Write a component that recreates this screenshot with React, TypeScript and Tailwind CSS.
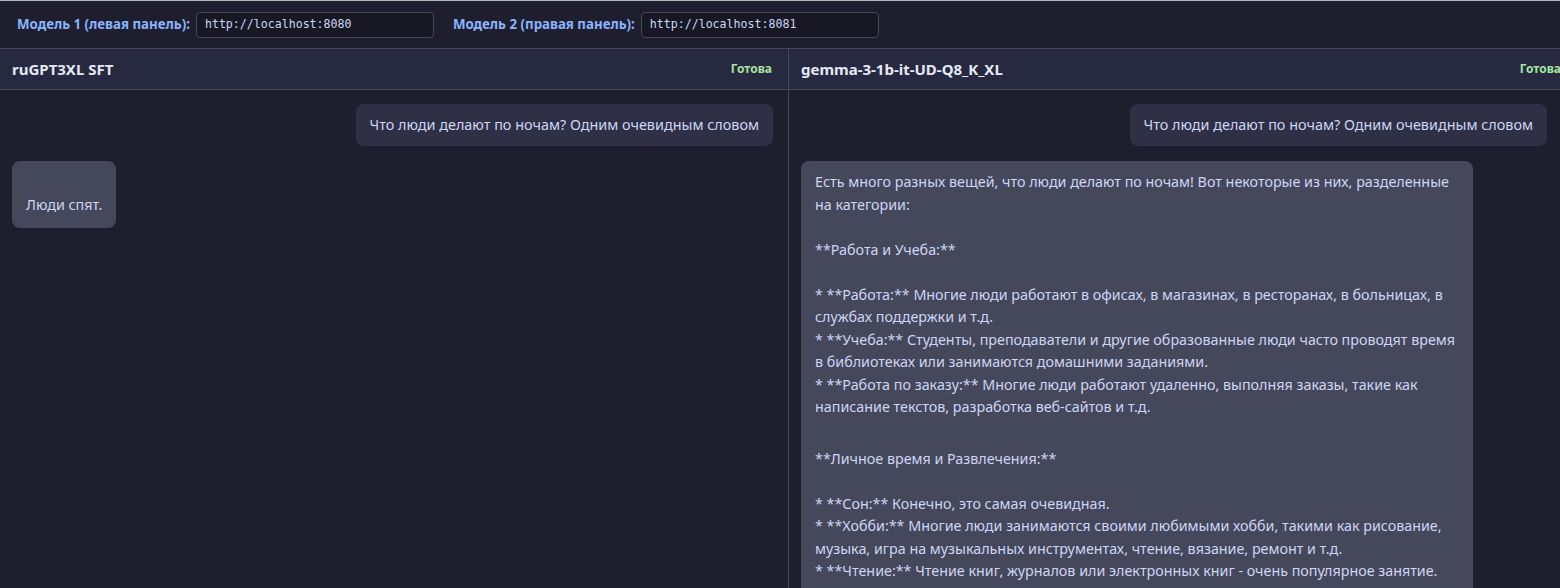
import React from 'react'

interface Message {
  role: 'user' | 'assistant'
  parts: string[]
}

const question = 'Что люди делают по ночам? Одним очевидным словом'

const leftMessages: Message[] = [
  { role: 'user', parts: [question] },
  { role: 'assistant', parts: ['\nЛюди спят.'] },
]

// the answer is split where the reference shows a slightly taller gap
const rightMessages: Message[] = [
  { role: 'user', parts: [question] },
  {
    role: 'assistant',
    parts: [
      `Есть много разных вещей, что люди делают по ночам! Вот некоторые из них, разделенные на категории:

**Работа и Учеба:**

* **Работа:** Многие люди работают в офисах, в магазинах, в ресторанах, в больницах, в службах поддержки и т.д.
* **Учеба:** Студенты, преподаватели и другие образованные люди часто проводят время в библиотеках или занимаются домашними заданиями.
* **Работа по заказу:** Многие люди работают удаленно, выполняя заказы, такие как написание текстов, разработка веб-сайтов и т.д.`,
      `**Личное время и Развлечения:**

* **Сон:** Конечно, это самая очевидная.
* **Хобби:** Многие люди занимаются своими любимыми хобби, такими как рисование, музыка, игра на музыкальных инструментах, чтение, вязание, ремонт и т.д.
* **Чтение:** Чтение книг, журналов или электронных книг - очень популярное занятие.`,
    ],
  },
]

function UrlField({ label, value }: { label: string; value: string }) {
  return (
    <div className="flex items-center gap-1.5">
      <span className="text-[13.3px] font-bold text-[#89b4fa]">{label}</span>
      <div className="flex h-[26px] w-[238px] items-center rounded-[4px] border border-[#45475a] bg-[#181825] px-2 font-['DejaVu_Sans_Mono',monospace] text-[11.6px] text-[#cdd6f4]">
        {value}
      </div>
    </div>
  )
}

function Bubble({ message }: { message: Message }) {
  if (message.role === 'user') {
    return (
      <div className="flex justify-end">
        <div className="whitespace-pre-wrap rounded-lg bg-[#2f3045] px-3.5 py-2.5 text-[14.4px] leading-[22px] text-[#cdd6f4]">
          {message.parts[0]}
        </div>
      </div>
    )
  }
  return (
    <div className="flex justify-start">
      <div className="max-w-[672px] whitespace-pre-wrap rounded-lg bg-[#45475a] px-3.5 pb-3 pt-2.5 text-[14.3px] leading-[22.5px] text-[#cdd6f4]">
        {message.parts.map((p, i) => (
          <div key={i} className={i > 0 ? 'pt-[29px]' : ''}>
            {p}
          </div>
        ))}
      </div>
    </div>
  )
}

function ChatPanel({ title, messages, scrolled }: { title: string; messages: Message[]; scrolled?: boolean }) {
  return (
    <div className="flex w-[788px] shrink-0 flex-col">
      <div className="flex h-[41px] shrink-0 items-center justify-between border-b border-[#45475a] bg-[#262940] pl-3 pr-4">
        <span className="text-[15px] font-bold text-[#e6e9f5]">{title}</span>
        <span className="text-[12px] font-bold text-[#a6e3a1]">Готова</span>
      </div>
      <div className={scrolled ? 'flex flex-1 flex-col gap-[15px] overflow-hidden pl-3 pr-[30px] pt-[14px]' : 'flex flex-1 flex-col gap-[15px] overflow-hidden pl-3 pr-[15px] pt-[14px]'}>
        {messages.map((m, i) => (
          <Bubble key={i} message={m} />
        ))}
      </div>
    </div>
  )
}

export default function App() {
  return (
    <div className="flex h-[588px] w-full flex-col overflow-hidden border-t border-[#b5b5bd] bg-[#1e1e2e] font-['Noto_Sans',sans-serif]">
      <div className="flex h-[48px] shrink-0 items-center gap-[19px] border-b border-[#45475a] bg-[#1e1e2e] px-[17px]">
        <UrlField label="Модель 1 (левая панель):" value="http://localhost:8080" />
        <UrlField label="Модель 2 (правая панель):" value="http://localhost:8081" />
      </div>
      <div className="flex flex-1 overflow-hidden">
        <ChatPanel title="ruGPT3XL SFT" messages={leftMessages} />
        <div className="w-px shrink-0 bg-[#45475a]" />
        <ChatPanel title="gemma-3-1b-it-UD-Q8_K_XL" messages={rightMessages} scrolled />
      </div>
    </div>
  )
}
